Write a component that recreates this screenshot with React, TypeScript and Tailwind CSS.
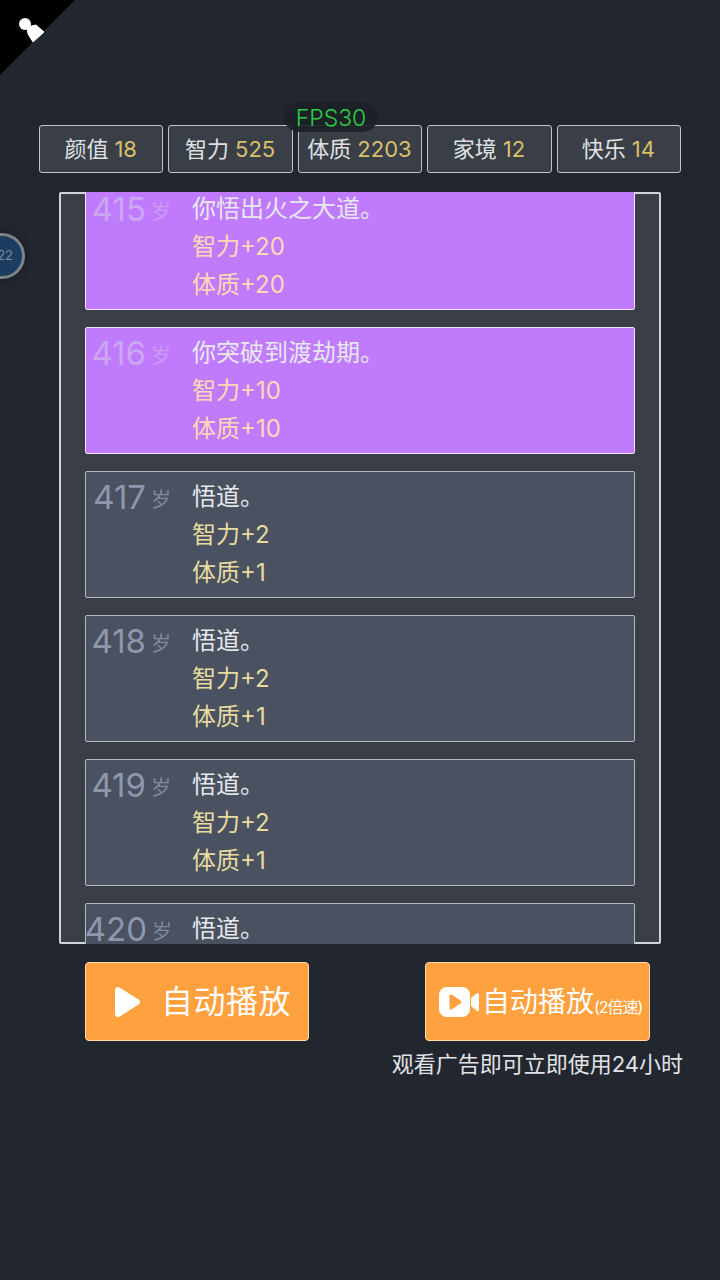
const font = "font-['Inter','Noto_Sans_CJK_SC',sans-serif]";

const stats = [
  { label: "颜值", value: 18 },
  { label: "智力", value: 525 },
  { label: "体质", value: 2203 },
  { label: "家境", value: 12 },
  { label: "快乐", value: 14 },
];

const events = [
  { age: 415, text: "你悟出火之大道。", effects: ["智力+20", "体质+20"], rare: true },
  { age: 416, text: "你突破到渡劫期。", effects: ["智力+10", "体质+10"], rare: true },
  { age: 417, text: "悟道。", effects: ["智力+2", "体质+1"], rare: false },
  { age: 418, text: "悟道。", effects: ["智力+2", "体质+1"], rare: false },
  { age: 419, text: "悟道。", effects: ["智力+2", "体质+1"], rare: false },
  { age: 420, text: "悟道。", effects: ["智力+2", "体质+1"], rare: false },
];

type LifeEvent = (typeof events)[number];

const EventCard = ({ event }: { event: LifeEvent }) => {
  const ageColor = event.rare ? "text-[#cba6f2]" : "text-[#8f97ae]";
  return (
    <div
      className={`flex h-[127px] shrink-0 rounded-[2px] border pt-[6px] ${
        event.rare ? "border-[#f0e2ff] bg-[#c07bfd]" : "border-[#b4b9c1] bg-[#4a5160]"
      }`}
    >
      <div className={`flex w-[85px] shrink-0 items-start ${ageColor}`}>
        <span className="flex w-[61px] justify-end whitespace-nowrap text-[33px] leading-[38px]">{event.age}</span>
        <span className="ml-[5px] pt-[8px] text-[20px] leading-[28px] opacity-80">岁</span>
      </div>
      <div className="ml-[21px] flex flex-col text-[24px] leading-[38px]">
        <div className="text-[#e6e8eb]">{event.text}</div>
        {event.effects.map((effect) => (
          <div key={effect} className={event.rare ? "text-[#fbd9b4]" : "text-[#e6dc9f]"}>
            {effect}
          </div>
        ))}
      </div>
    </div>
  );
};

const App = () => {
  return (
    <div className={`${font} relative h-[1280px] w-[720px] overflow-hidden bg-[#22262f] pt-[125px]`}>
      {/* corner badge */}
      <svg className="absolute left-0 top-0" width="76" height="76" viewBox="0 0 76 76">
        <path d="M0 0H75L0 75Z" fill="#000" />
        <circle cx="25" cy="24" r="6" fill="#fff" />
        <path d="M27 27L36 25L44 32L33 42L28 34Z" fill="#fff" stroke="#fff" strokeLinejoin="round" />
      </svg>

      {/* fps counter */}
      <div className="absolute left-[284px] top-[102px] z-10 flex h-[30px] w-[94px] items-center justify-center rounded-full bg-[#1c2027]/90 pt-[2px] text-[23px] font-light text-[#2ccf45]">
        FPS30
      </div>

      {/* floating ball */}
      <div className="absolute left-[-21px] top-[233px] flex h-[46px] w-[46px] items-center justify-end rounded-full border-[3px] border-[#7d8389] bg-[#1d3d60] pr-[9px] text-[13px] text-[#7b8a9c] shadow-[0_0_6px_#15181e]">
        22
      </div>

      <div className="ml-[39px] grid w-[642px] grid-cols-5 gap-[5px]">
        {stats.map((stat) => (
          <div
            key={stat.label}
            className="flex h-[48px] items-center justify-center rounded-[3px] border border-[#c0c4ca] bg-[#3a3f47] pr-[1px] text-[22px] text-[#dfe1e4]"
          >
            {stat.label}
            <span className="ml-[6px] text-[#d8bf6c]">{stat.value}</span>
          </div>
        ))}
      </div>

      <div className="ml-[59px] mt-[19px] h-[752px] w-[602px] rounded-[2px] border-2 border-[#d0d3d8] bg-[#3a3f47]">
        <div className="-mx-[2px] -my-[2px] h-[752px] overflow-hidden px-[26px]">
          <div className="-mt-[9px] flex flex-col gap-[17px]">
            {events.map((event) => (
              <EventCard key={event.age} event={event} />
            ))}
          </div>
        </div>
      </div>

      <div className="ml-[85px] mt-[18px] flex gap-[116px]">
        <div className="flex h-[79px] w-[224px] items-center rounded-[4px] border border-[#ffdcae] bg-[#ffa13f] text-white">
          <svg className="ml-[28px]" width="27" height="32" viewBox="0 0 27 32">
            <path d="M4 4L23 16L4 28Z" fill="#fff" stroke="#fff" strokeWidth="6" strokeLinejoin="round" />
          </svg>
          <span className="ml-[20px] text-[32px] tracking-[0.5px]">自动播放</span>
        </div>
        <div className="flex h-[79px] w-[225px] items-center rounded-[4px] border border-[#ffdcae] bg-[#ffa13f] text-white">
          <svg className="ml-[13px] shrink-0" width="40" height="30" viewBox="0 0 40 30">
            <rect x="0" y="0" width="31" height="30" rx="8" fill="#fff" />
            <path d="M32 11L38 6Q40 5 40 8V22Q40 25 38 24L32 19Z" fill="#fff" />
            <path d="M12 9L21 15L12 21Z" fill="#ffa13f" stroke="#ffa13f" strokeWidth="3" strokeLinejoin="round" />
          </svg>
          <span className="ml-[3px] whitespace-nowrap text-[28px]">自动播放</span>
          <span className="mt-[10px] whitespace-nowrap text-[16px] tracking-[-1px]">(2倍速)</span>
        </div>
      </div>

      <div className="mt-[9px] w-[683px] text-right text-[22px] leading-[28px] text-[#e2e3e6]">
        观看广告即可立即使用24小时
      </div>
    </div>
  );
};

export default App;
